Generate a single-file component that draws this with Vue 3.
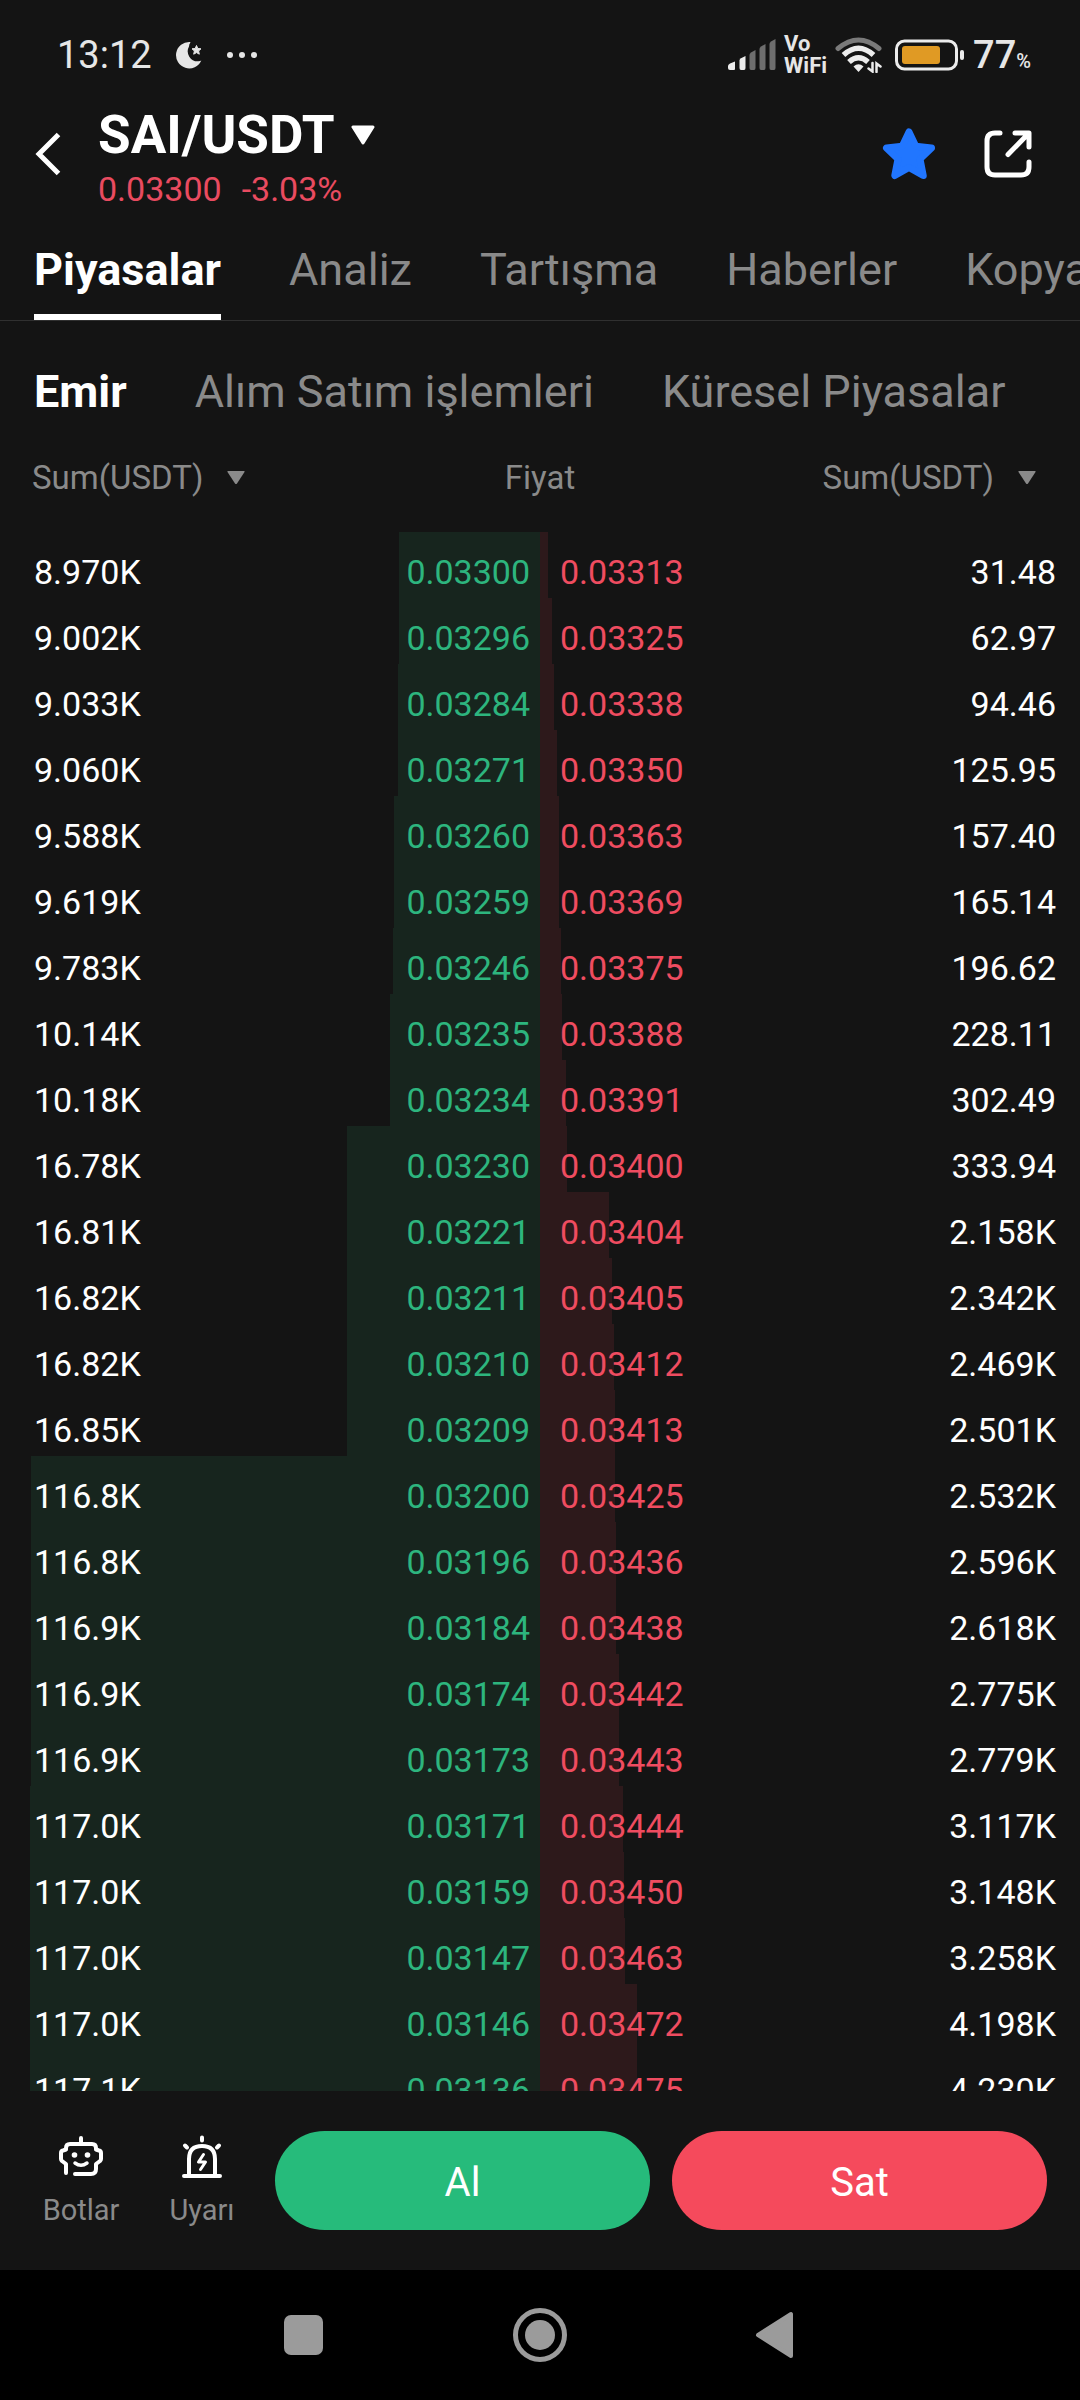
<script setup>
import { ref } from 'vue'

const tabs = ['Piyasalar', 'Analiz', 'Tartışma', 'Haberler', 'Kopya']
const sections = ['Emir', 'Alım Satım işlemleri', 'Küresel Piyasalar']
const activeTab = ref(tabs[0])
const activeSection = ref(sections[0])

// bid sum, bid price, ask price, ask sum
const book = [
  ['8.970K', '0.03300', '0.03313', '31.48'],
  ['9.002K', '0.03296', '0.03325', '62.97'],
  ['9.033K', '0.03284', '0.03338', '94.46'],
  ['9.060K', '0.03271', '0.03350', '125.95'],
  ['9.588K', '0.03260', '0.03363', '157.40'],
  ['9.619K', '0.03259', '0.03369', '165.14'],
  ['9.783K', '0.03246', '0.03375', '196.62'],
  ['10.14K', '0.03235', '0.03388', '228.11'],
  ['10.18K', '0.03234', '0.03391', '302.49'],
  ['16.78K', '0.03230', '0.03400', '333.94'],
  ['16.81K', '0.03221', '0.03404', '2.158K'],
  ['16.82K', '0.03211', '0.03405', '2.342K'],
  ['16.82K', '0.03210', '0.03412', '2.469K'],
  ['16.85K', '0.03209', '0.03413', '2.501K'],
  ['116.8K', '0.03200', '0.03425', '2.532K'],
  ['116.8K', '0.03196', '0.03436', '2.596K'],
  ['116.9K', '0.03184', '0.03438', '2.618K'],
  ['116.9K', '0.03174', '0.03442', '2.775K'],
  ['116.9K', '0.03173', '0.03443', '2.779K'],
  ['117.0K', '0.03171', '0.03444', '3.117K'],
  ['117.0K', '0.03159', '0.03450', '3.148K'],
  ['117.0K', '0.03147', '0.03463', '3.258K'],
  ['117.0K', '0.03146', '0.03472', '4.198K'],
  ['117.1K', '0.03136', '0.03475', '4.230K'],
]

const amount = (s) => parseFloat(s) * (s.endsWith('K') ? 1000 : 1)
const deepest = Math.max(...book.flatMap((r) => [amount(r[0]), amount(r[3])]))

// Depth bars grow with the square root of the cumulative sum.
const depth = (s) => `${(Math.sqrt(amount(s) / deepest) * 47.2).toFixed(2)}%`
</script>

<template>
  <div class="app">
    <div class="status">
      <div class="status-side">
        <span class="clock">13:12</span>
        <svg class="moon" width="26" height="28" viewBox="0 0 26 28">
          <path d="M14 1a13.200 13.200 0 1 0 11.300 18.500q-1 .8-3 .8A10 10 0 0 1 13 5.500q0-2.500 1.500-4z" fill="#e6e6e6" />
          <path d="M20.500 4.500l1.300 3 3.200.3-2.400 2.200.7 3.200-2.800-1.600-2.800 1.600.7-3.200-2.400-2.200 3.200-.3z" fill="#e6e6e6" stroke="#e6e6e6" stroke-width="1" stroke-linejoin="round" />
        </svg>
        <svg width="32" height="8" viewBox="0 0 32 8" fill="#e6e6e6">
          <circle cx="4" cy="4" r="3" /><circle cx="16" cy="4" r="3" /><circle cx="28" cy="4" r="3" />
        </svg>
      </div>
      <div class="status-side status-right">
        <svg width="48" height="32" viewBox="0 0 48 32">
          <g fill="#ececec">
            <path d="M0 27q0-1.500 2-2.500l5-2V30q0 1-1 1H2q-2 0-2-2z" />
            <path d="M11.500 21.500q0-1.500 1.500-2.300l4.500-2.200V29q0 2-1.500 2h-3q-1.500 0-1.500-2z" />
          </g>
          <g fill="#6e6e6e">
            <path d="M21.500 16q0-1.500 1.500-2.500l4.500-2.500V29q0 2-1.500 2h-3q-1.500 0-1.500-2z" />
            <path d="M31.500 10q0-1.500 1.500-2.500L37.500 5v24q0 2-1.500 2h-3q-1.500 0-1.500-2z" />
            <path d="M41.500 5q0-1.500 1.500-2.500L47.500 0v29q0 2-1.500 2h-3q-1.500 0-1.500-2z" />
          </g>
        </svg>
        <span class="vowifi">Vo<br />WiFi</span>
        <svg width="48" height="36" viewBox="0 0 48 36" fill="none" stroke-linecap="round">
          <path d="M3 11.500Q23.500-5.500 44 11.500" stroke="#7a7a7a" stroke-width="5" />
          <path d="M8.500 18Q23.500 4.500 38.500 18" stroke="#ececec" stroke-width="5.500" stroke-linecap="butt" />
          <path d="M14 25q9.500-8.500 19 0" stroke="#ececec" stroke-width="5.500" stroke-linecap="butt" />
          <path d="M18.500 29.500q5-4.500 10 0L23.500 35z" fill="#ececec" />
          <path d="M37.500 26v8.500l-4-3M41.500 35v-8.500l4 3" stroke="#ececec" stroke-width="2.500" />
        </svg>
        <svg class="battery" width="70" height="32" viewBox="0 0 70 32">
          <rect x="1.500" y="2" width="60" height="28" rx="8" fill="none" stroke="#ececec" stroke-width="3" />
          <rect x="7" y="7" width="38" height="18" rx="3" fill="#e09a24" />
          <rect x="65" y="11" width="4" height="10" rx="2" fill="#ececec" />
        </svg>
        <span class="charge">77<small>%</small></span>
      </div>
    </div>

    <header class="header">
      <button class="icon-button" aria-label="Geri">
        <svg width="28" height="44" viewBox="0 0 28 44" fill="none" stroke="#fff" stroke-width="5">
          <path d="M24.500 2.500L5 22l19.500 19.500" />
        </svg>
      </button>
      <div class="pair">
        <button class="symbol">
          SAI/USDT
          <svg width="24" height="20" viewBox="0 0 24 20" fill="#fff" stroke="#fff" stroke-width="3" stroke-linejoin="round">
            <path d="M2 2h20L12 18z" />
          </svg>
        </button>
        <div class="quote"><span>0.03300</span><span>-3.03%</span></div>
      </div>
      <button class="icon-button star" aria-label="Favori">
        <svg width="54" height="54" viewBox="0 0 54 54" fill="#2176ff" stroke="#2176ff" stroke-width="7" stroke-linejoin="round">
          <path d="M27 5l6.800 14.200 15.700 1.800L38 32l3.200 16.500L27 40.500l-14.200 8L16 32 4.500 21l15.700-1.800z" />
        </svg>
      </button>
      <button class="icon-button" aria-label="Paylaş">
        <svg width="48" height="48" viewBox="0 0 48 48" fill="none" stroke="#fff" stroke-width="5" stroke-linecap="round" stroke-linejoin="round">
          <path d="M16 3h-5q-8 0-8 8v26q0 8 8 8h26q8 0 8-8v-5" />
          <path d="M31 3h14v14M44 4L24 24.500" />
        </svg>
      </button>
    </header>

    <nav class="tabs main-tabs">
      <button v-for="t in tabs" :key="t" :class="{ active: t === activeTab }" @click="activeTab = t">{{ t }}</button>
    </nav>
    <nav class="tabs sub-tabs">
      <button v-for="s in sections" :key="s" :class="{ active: s === activeSection }" @click="activeSection = s">{{ s }}</button>
    </nav>

    <main class="book-area">
      <table class="book">
        <thead>
          <tr>
            <th class="sum-left">
              <button class="unit">Sum(USDT)
                <svg width="18" height="14" viewBox="0 0 18 14" fill="#8a8a8a"><path d="M1 0h16q1 0 .5 1L10 12.500q-1 1-2 0L.5 1Q0 0 1 0z" /></svg>
              </button>
            </th>
            <th colspan="2">Fiyat</th>
            <th class="sum-right">
              <button class="unit">Sum(USDT)
                <svg width="18" height="14" viewBox="0 0 18 14" fill="#8a8a8a"><path d="M1 0h16q1 0 .5 1L10 12.500q-1 1-2 0L.5 1Q0 0 1 0z" /></svg>
              </button>
            </th>
          </tr>
        </thead>
        <tbody>
          <tr v-for="r in book" :key="r[1]" :style="{ '--bid': depth(r[0]), '--ask': depth(r[3]) }">
            <td class="sum-left">{{ r[0] }}</td>
            <td class="bid">{{ r[1] }}</td>
            <td class="ask">{{ r[2] }}</td>
            <td class="sum-right">{{ r[3] }}</td>
          </tr>
        </tbody>
      </table>
    </main>

    <footer class="actions">
      <button class="tool">
        <svg width="44" height="44" viewBox="0 0 44 44" fill="none" stroke="#fff" stroke-width="4" stroke-linecap="round" stroke-linejoin="round">
          <path d="M22 3v6M7 38v-9l-4-3q-1-1-1-2v-6q0-2 2-2.500l3-1V13q0-4 4-4h22q4 0 4 4v1.500l3 1q2 .5 2 2.500v6q0 1-1 2l-4 3v5q0 5-5 5H16" />
          <path d="M16 28q6 4.500 12 0" stroke-width="3.500" />
          <circle cx="15.500" cy="20" r="2.800" fill="#fff" stroke="none" />
          <circle cx="28.500" cy="20" r="2.800" fill="#fff" stroke="none" />
        </svg>
        <span>Botlar</span>
      </button>
      <button class="tool">
        <svg width="44" height="44" viewBox="0 0 44 44" fill="none" stroke="#fff" stroke-width="4" stroke-linecap="round" stroke-linejoin="round">
          <path d="M4 41h36M9 40V24q0-13 13-13t13 13v16M22 2.500v3M5 10.500l2 2M39 10.500l-2 2" />
          <path d="M23.500 19.500L18.500 27h7L20.500 34.500" stroke-width="3" />
        </svg>
        <span>Uyarı</span>
      </button>
      <button class="trade buy">Al</button>
      <button class="trade sell">Sat</button>
    </footer>

    <nav class="system">
      <button aria-label="Son uygulamalar">
        <svg width="56" height="56" viewBox="0 0 56 56"><rect x="8" y="8" width="39" height="40" rx="7" fill="#9b9b9b" /></svg>
      </button>
      <button aria-label="Ana ekran">
        <svg width="56" height="56" viewBox="0 0 56 56">
          <circle cx="28" cy="28" r="24.500" fill="none" stroke="#9b9b9b" stroke-width="5" />
          <circle cx="28" cy="28" r="15" fill="#9b9b9b" />
        </svg>
      </button>
      <button aria-label="Geri git">
        <svg width="56" height="56" viewBox="0 0 56 56" fill="#9b9b9b" stroke="#9b9b9b" stroke-width="4" stroke-linejoin="round">
          <path d="M43 7v42L10 28z" />
        </svg>
      </button>
    </nav>
  </div>
</template>

<style>
body {
  background: #141414;
}
</style>

<style scoped>
.app {
  display: flex;
  flex-direction: column;
  height: 100vh;
  overflow: hidden;
  background: #141414;
  color: #fff;
  font-family: Roboto, 'Liberation Sans', sans-serif;
}

button {
  padding: 0;
  border: 0;
  background: none;
  color: inherit;
  font: inherit;
  cursor: pointer;
}

svg {
  display: block;
  flex: none;
}

.status {
  display: flex;
  justify-content: space-between;
  height: 106px;
  padding: 0 49px 0 57px;
  box-sizing: border-box;
  color: #e6e6e6;
}

.status-side {
  display: flex;
  align-items: center;
  gap: 24px;
  padding-top: 4px;
}

.status-right {
  gap: 8px;
}

.clock {
  font-size: 38px;
}

.vowifi {
  font-size: 22px;
  font-weight: 700;
  line-height: 22px;
}

.battery {
  margin-left: 4px;
}

.charge {
  font-size: 38px;
  font-weight: 500;
}

.charge small {
  font-size: 20px;
}

.header {
  display: flex;
  align-items: center;
  padding: 0 48px 43px 34px;
}

.pair {
  flex: 1;
  margin-left: 36px;
}

.symbol {
  display: flex;
  align-items: center;
  gap: 16px;
  font-size: 53px;
  font-weight: 700;
  line-height: 58px;
}

.quote {
  display: flex;
  gap: 20px;
  margin-top: 12px;
  color: #e94b60;
  font-size: 34px;
  line-height: 26px;
}

.star {
  margin-right: 48px;
}

.tabs {
  display: flex;
  flex: none;
  gap: 68px;
  padding: 0 34px;
  overflow: hidden;
  color: #8a8a8a;
  font-size: 45px;
  line-height: 50px;
  white-space: nowrap;
}

.tabs button {
  flex: none;
}

.tabs .active {
  color: #fff;
  font-weight: 700;
}

.main-tabs {
  border-bottom: 1px solid #303030;
}

.main-tabs button {
  padding-bottom: 19px;
  border-bottom: 6px solid transparent;
}

.main-tabs .active {
  border-color: #fff;
}

.sub-tabs {
  padding-top: 46px;
}

.book-area {
  flex: 1;
  min-height: 0;
  overflow: hidden;
}

.book {
  width: 100%;
  border-collapse: collapse;
  table-layout: fixed;
  font-size: 34px;
}

.book th {
  padding: 41px 0 34px;
  color: #8a8a8a;
  font-size: 33px;
  font-weight: 400;
  line-height: 40px;
}

.book td {
  padding: 15px 0 0;
  line-height: 51px;
}

.book tbody tr {
  background: linear-gradient(
    to right,
    transparent calc(50% - var(--bid)),
    #17251e calc(50% - var(--bid)) 50%,
    #2d191b 50% calc(50% + var(--ask)),
    transparent calc(50% + var(--ask))
  );
}

.book .sum-left {
  padding-left: 34px;
  text-align: left;
}

.book .sum-right {
  padding-right: 24px;
  text-align: right;
}

.book th.sum-left {
  padding-left: 32px;
}

.book th.sum-right {
  padding-right: 44px;
}

.book .bid {
  padding-right: 10px;
  color: #2db57e;
  text-align: right;
}

.book .ask {
  padding-left: 20px;
  color: #ef4c60;
  text-align: left;
}

.unit {
  display: inline-flex;
  align-items: center;
  gap: 24px;
}

.actions {
  display: flex;
  flex: none;
  align-items: center;
  padding: 40px 33px;
}

.tool {
  display: flex;
  flex-direction: column;
  align-items: center;
  gap: 14px;
  width: 96px;
  margin-right: 25px;
  color: #8a8a8a;
  font-size: 29px;
  line-height: 34px;
}

.trade {
  flex: 1;
  height: 99px;
  padding-top: 3px;
  border-radius: 50px;
  color: #fff;
  font-size: 40px;
}

.buy {
  background: #26bb7b;
}

.sell {
  margin-left: 22px;
  background: #f54a5c;
}

.system {
  display: flex;
  flex: none;
  align-items: center;
  justify-content: center;
  gap: 180px;
  height: 130px;
  background: #000;
}
</style>
